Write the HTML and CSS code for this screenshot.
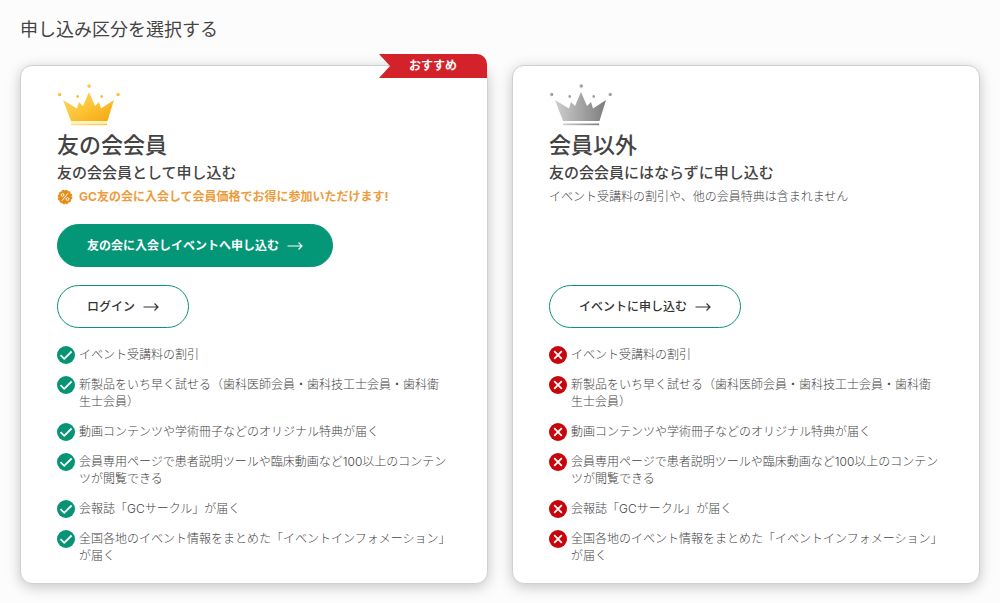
FILE: index.html
```html
<!DOCTYPE html>
<html lang="ja">
<head>
    <meta charset="UTF-8">
    <meta name="viewport" content="width=device-width, initial-scale=1.0">
    <title>申し込み区分を選択する</title>
    <link rel="stylesheet" href="styles.css">
</head>
<body>

    <!-- Shared icons -->
    <svg class="sprite" aria-hidden="true">
        <defs>
            <linearGradient id="gold" x1="0" y1="0" x2="1" y2="1">
                <stop offset="0" stop-color="#fbdc6a"/>
                <stop offset="0.5" stop-color="#fcc437"/>
                <stop offset="1" stop-color="#f6a50c"/>
            </linearGradient>
            <linearGradient id="goldBar" x1="0" y1="0" x2="1" y2="0">
                <stop offset="0" stop-color="#fbe38c"/>
                <stop offset="1" stop-color="#f9c843"/>
            </linearGradient>
            <linearGradient id="silver" x1="0" y1="0" x2="1" y2="0">
                <stop offset="0" stop-color="#cfcfcf"/>
                <stop offset="1" stop-color="#7c7c7c"/>
            </linearGradient>
            <symbol id="crown" viewBox="0 0 64 42">
                <path d="M6 16l14 8.500 2-6.500 4 4 6-14 6 14 4-4 2 6.500 13-8.500-6.500 21H14z"/>
                <circle cx="2.500" cy="10.500" r="1.700"/>
                <circle cx="61" cy="10.500" r="1.700"/>
                <circle cx="32" cy="2" r="1.800"/>
                <circle cx="20.500" cy="12.500" r="1.400"/>
                <circle cx="44.500" cy="12.500" r="1.400"/>
            </symbol>
            <symbol id="arrow" viewBox="0 0 16 10">
                <path d="M0.500 5H15M11.500 1.500L15 5l-3.500 3.500" fill="none" stroke="currentColor" stroke-width="1.200"/>
            </symbol>
            <symbol id="check" viewBox="0 0 18 18">
                <circle cx="9" cy="9" r="9" fill="#089474"/>
                <path d="M3.500 9.200l3.700 3.600 7.400-7.300" fill="none" stroke="#fff" stroke-width="1.800"/>
            </symbol>
            <symbol id="cross" viewBox="0 0 18 18">
                <circle cx="9" cy="9" r="9" fill="#c7050c"/>
                <path d="M5.200 5.200l7.600 7.600M12.800 5.200l-7.600 7.600" fill="none" stroke="#fff" stroke-width="1.800"/>
            </symbol>
        </defs>
    </svg>

    <main class="entry">
        <h1 class="entry-title">申し込み区分を選択する</h1>

        <div class="cards">
            <!-- Member -->
            <section class="card">
                <span class="ribbon">おすすめ</span>
                <svg class="crown" viewBox="0 0 64 42" aria-hidden="true">
                    <use href="#crown" fill="url(#gold)"/>
                    <rect x="14" y="37" width="36" height="2" fill="#fff3bf"/>
                    <rect x="14" y="39.500" width="36" height="1.700" fill="url(#goldBar)"/>
                </svg>
                <h2 class="card-title">友の会会員</h2>
                <p class="card-lead">友の会会員として申し込む</p>
                <p class="card-note offer">
                    <svg class="offer-icon" viewBox="0 0 16 16" aria-hidden="true">
                        <circle cx="8" cy="8" r="6.700" fill="#e88c18" stroke="#e88c18" stroke-width="1.200" stroke-dasharray="2.200 1.308"/>
                        <g fill="none" stroke="#fff" stroke-width="1">
                            <path d="M11 4.200L5 11.800"/>
                            <circle cx="5.500" cy="6" r="1.400"/>
                            <circle cx="10.500" cy="10" r="1.400"/>
                        </g>
                    </svg>
                    <span>GC友の会に入会して会員価格でお得に参加いただけます!</span>
                </p>
                <div class="actions">
                    <a class="btn btn-primary" href="#">友の会に入会しイベントへ申し込む<svg class="arrow" aria-hidden="true"><use href="#arrow"/></svg></a>
                    <a class="btn" href="#">ログイン<svg class="arrow" aria-hidden="true"><use href="#arrow"/></svg></a>
                </div>
                <ul class="benefits">
                    <li><svg class="mark" aria-hidden="true"><use href="#check"/></svg><span>イベント受講料の割引</span></li>
                    <li><svg class="mark" aria-hidden="true"><use href="#check"/></svg><span>新製品をいち早く試せる（歯科医師会員・歯科技工士会員・歯科衛生士会員）</span></li>
                    <li><svg class="mark" aria-hidden="true"><use href="#check"/></svg><span>動画コンテンツや学術冊子などのオリジナル特典が届く</span></li>
                    <li><svg class="mark" aria-hidden="true"><use href="#check"/></svg><span>会員専用ページで患者説明ツールや臨床動画など100以上のコンテンツが閲覧できる</span></li>
                    <li><svg class="mark" aria-hidden="true"><use href="#check"/></svg><span>会報誌「GCサークル」が届く</span></li>
                    <li><svg class="mark" aria-hidden="true"><use href="#check"/></svg><span>全国各地のイベント情報をまとめた「イベントインフォメーション」が届く</span></li>
                </ul>
            </section>

            <!-- Non-member -->
            <section class="card">
                <svg class="crown" viewBox="0 0 64 42" aria-hidden="true">
                    <use href="#crown" fill="url(#silver)"/>
                    <rect x="14" y="39.500" width="36" height="1.700" fill="url(#silver)"/>
                </svg>
                <h2 class="card-title">会員以外</h2>
                <p class="card-lead">友の会会員にはならずに申し込む</p>
                <p class="card-note">イベント受講料の割引や、他の会員特典は含まれません</p>
                <div class="actions">
                    <a class="btn" href="#">イベントに申し込む<svg class="arrow" aria-hidden="true"><use href="#arrow"/></svg></a>
                </div>
                <ul class="benefits">
                    <li><svg class="mark" aria-hidden="true"><use href="#cross"/></svg><span>イベント受講料の割引</span></li>
                    <li><svg class="mark" aria-hidden="true"><use href="#cross"/></svg><span>新製品をいち早く試せる（歯科医師会員・歯科技工士会員・歯科衛生士会員）</span></li>
                    <li><svg class="mark" aria-hidden="true"><use href="#cross"/></svg><span>動画コンテンツや学術冊子などのオリジナル特典が届く</span></li>
                    <li><svg class="mark" aria-hidden="true"><use href="#cross"/></svg><span>会員専用ページで患者説明ツールや臨床動画など100以上のコンテンツが閲覧できる</span></li>
                    <li><svg class="mark" aria-hidden="true"><use href="#cross"/></svg><span>会報誌「GCサークル」が届く</span></li>
                    <li><svg class="mark" aria-hidden="true"><use href="#cross"/></svg><span>全国各地のイベント情報をまとめた「イベントインフォメーション」が届く</span></li>
                </ul>
            </section>
        </div>
    </main>

</body>
</html>
```
FILE: styles.css
```css
* {
    box-sizing: border-box;
}

body {
    margin: 0;
    background-color: #fcfcfc;
    color: #444444;
    font-family: Inter, "Noto Sans CJK JP", sans-serif;
    font-size: 12px;
    line-height: 17px;
}

h1, h2, p, ul {
    margin: 0;
    padding: 0;
}

.sprite {
    position: absolute;
    width: 0;
    height: 0;
}

.entry {
    padding: 17px 20px;
}

.entry-title {
    font-size: 18px;
    font-weight: 400;
    line-height: 26px;
    margin-bottom: 22px;
}

.cards {
    display: grid;
    grid-template-columns: 1fr 1fr;
    gap: 24px;
}

.card {
    position: relative;
    display: flex;
    flex-direction: column;
    padding: 18px 38px 18px 36px;
    background-color: #ffffff;
    border: 1px solid #d0d0d0;
    border-radius: 12px;
    box-shadow: 0 3px 14px rgba(0, 0, 0, 0.22);
}

/* Ribbon over the top right corner */
.ribbon {
    position: absolute;
    top: -12px;
    right: 0;
    width: 108px;
    height: 24px;
    line-height: 24px;
    text-align: center;
    font-weight: 700;
    color: #ffffff;
    background-color: #d3222a;
    border-top-right-radius: 10px;
    clip-path: polygon(0 0, 100% 0, 100% 100%, 0 100%, 11px 50%);
}

.crown {
    width: 64px;
    height: 42px;
}

.card-title {
    font-size: 22px;
    font-weight: 500;
    line-height: 32px;
    margin-top: 3px;
}

.card-lead {
    font-size: 15px;
    font-weight: 500;
    line-height: 24px;
}

.card-note {
    line-height: 24px;
    font-weight: 300;
}

.offer {
    display: flex;
    align-items: center;
    gap: 6px;
    font-weight: 700;
    color: #ed9c3c;
}

.offer-icon {
    width: 16px;
    height: 16px;
}

.actions {
    display: flex;
    flex-direction: column;
    align-items: flex-start;
    gap: 18px;
    margin-top: auto;
    padding-top: 15px;
}

.btn {
    display: flex;
    align-items: center;
    gap: 8px;
    height: 43px;
    padding: 0 29px;
    border: 1px solid #089474;
    border-radius: 22px;
    color: #333333;
    font-weight: 500;
    text-decoration: none;
}

.btn-primary {
    background-color: #049777;
    color: #ffffff;
    font-weight: 700;
}

.arrow {
    width: 16px;
    height: 10px;
}

.benefits {
    display: flex;
    flex-direction: column;
    gap: 12px;
    margin-top: 18px;
    list-style: none;
    font-weight: 300;
}

.benefits li {
    display: flex;
    align-items: flex-start;
    gap: 4px;
}

.benefits span {
    padding-bottom: 1px;
}

.mark {
    flex: none;
    width: 18px;
    height: 18px;
}

@media screen and (max-width: 700px) {
    .cards {
        grid-template-columns: 1fr;
    }
}
```
